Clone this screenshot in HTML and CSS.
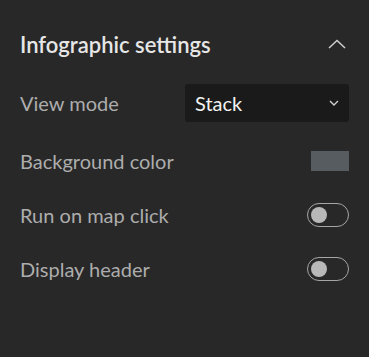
FILE: index.html
```html
<!DOCTYPE html>
<html lang="en">

<head>
    <meta charset="UTF-8">
    <meta name="viewport" content="width=device-width, initial-scale=1.0">
    <title>Infographic settings</title>
    <link rel="stylesheet" href="styles.css">
</head>

<body>
    <div class="panel">
        <div class="panel-header">
            <h2>Infographic settings</h2>
            <svg class="collapse-icon" width="18" height="10" viewBox="0 0 18 10">
                <path d="M1 9 L9 1.5 L17 9" fill="none" stroke="#cfcfcf" stroke-width="1.5" />
            </svg>
        </div>

        <div class="setting setting-first">
            <span class="label">View mode</span>
            <div class="select">
                <span>Stack</span>
                <svg width="10" height="6" viewBox="0 0 10 6">
                    <path d="M1 1 L5 5 L9 1" fill="none" stroke="#d0d0d0" stroke-width="1.4" />
                </svg>
            </div>
        </div>

        <div class="setting">
            <span class="label">Background color</span>
            <div class="swatch"></div>
        </div>

        <div class="setting">
            <span class="label">Run on map click</span>
            <div class="toggle"><div class="knob"></div></div>
        </div>

        <div class="setting">
            <span class="label">Display header</span>
            <div class="toggle"><div class="knob"></div></div>
        </div>
    </div>
</body>

</html>
```

FILE: styles.css
```css
body {
    font-family: Lato, "Noto Sans", sans-serif;
    background-color: #282828;
    margin: 0;
    padding: 0;
}

.panel {
    padding: 20px 20px;
}

.panel-header {
    display: flex;
    align-items: center;
    justify-content: space-between;
    height: 48px;
    margin-bottom: 16px;
}

.panel-header h2 {
    margin: 0;
    font-size: 22px;
    font-weight: 600;
    color: #e6e6e6;
}

.collapse-icon {
    margin-right: 3px;
}

.setting {
    display: flex;
    align-items: center;
    justify-content: space-between;
    height: 38px;
    margin-bottom: 16px;
}

.setting-first {
    margin-bottom: 20px;
}

.label {
    font-size: 20px;
    color: #adadad;
}

.select {
    display: flex;
    align-items: center;
    justify-content: space-between;
    box-sizing: border-box;
    width: 164px;
    height: 38px;
    padding: 0 10px 0 10px;
    background: #1a1a1a;
    border-radius: 3px;
    color: #f2f2f2;
    font-size: 20px;
}

.swatch {
    width: 38px;
    height: 20px;
    background: #575c60;
}

.toggle {
    box-sizing: border-box;
    width: 42px;
    height: 24px;
    border: 1.5px solid #a6a6a6;
    border-radius: 12px;
    display: flex;
    align-items: center;
    padding-left: 3px;
}

.knob {
    width: 16px;
    height: 16px;
    border-radius: 50%;
    background: #b8b8b8;
}
```
